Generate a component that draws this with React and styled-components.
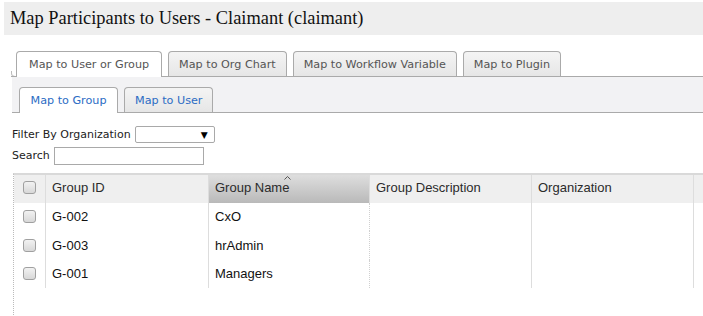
import styled, {createGlobalStyle} from "styled-components";

const GlobalStyle = createGlobalStyle`
  body {
    margin: 0;
    background: #fff;
    font-family: "DejaVu Sans", Verdana, sans-serif;
  }
`

const StyledPage = styled.div`
  padding: 2px 0 0 4px;
  width: 699px;
  overflow: hidden;
`

const StyledTitleBar = styled.div`
  height: 33px;
  background-color: #eeeeee;
  display: flex;
  align-items: center;
  padding-left: 6px;
  margin-right: -20px;
`

const StyledTitle = styled.h1`
  margin: 0;
  font-family: "Liberation Serif", "Times New Roman", serif;
  font-weight: normal;
  font-size: 18.4px;
  color: #111;
`

const StyledTabBar = styled.div`
  position: relative;
  display: flex;
  gap: 6px;
  margin-top: 16px;
  margin-left: 7px;
  padding-left: 5px;
  border-bottom: 1px solid #aaaaaa;
  height: 25px;
  align-items: flex-end;

  &::before {
    content: '';
    position: absolute;
    left: 0;
    bottom: -1px;
    width: 5px;
    height: 5px;
    border-left: 1px solid #bbbbbb;
    border-bottom: 1px solid #aaaaaa;
    border-bottom-left-radius: 4px;
  }
`

const StyledTab = styled.div`
  box-sizing: border-box;
  padding: 0 ${props => props.pad || 10}px;
  display: flex;
  align-items: center;
  font-size: 11.2px;
  color: ${props => props.color || '#555'};
  border: 1px solid #aaaaaa;
  border-bottom: none;
  border-radius: 4px 4px 0 0;
  background: ${props => props.active ? '#fff' : 'linear-gradient(#f4f4f4, #e6e6e6)'};
  margin-bottom: ${props => props.active ? '-1px' : '0'};
  height: ${props => props.active ? '26px' : '25px'};
  white-space: nowrap;
`

const StyledSubPanel = styled.div`
  margin-left: 8px;
  background-color: #f2f2f4;
  padding-top: 9px;
`

const StyledSubTabBar = styled.div`
  display: flex;
  gap: 6px;
  padding-left: 7px;
  border-bottom: 1px solid #aaaaaa;
  height: 26px;
  align-items: flex-end;
`

const StyledFilters = styled.div`
  padding: 13px 0 0 8px;
  display: flex;
  flex-direction: column;
  gap: 3px;
  font-size: 11px;
  color: #222;
`

const StyledFilterRow = styled.label`
  display: flex;
  align-items: center;
  gap: 4px;
  height: ${props => props.tall ? '19px' : '17px'};
`

const StyledSelect = styled.div`
  width: 80px;
  height: 17px;
  box-sizing: border-box;
  border: 1px solid #a9a9a9;
  border-radius: 2px;
  background: #fff;
  display: flex;
  justify-content: flex-end;
  align-items: center;
  padding-right: 6px;
  font-size: 9px;
  color: #000;
`

const StyledInput = styled.div`
  width: 150px;
  height: 18px;
  box-sizing: border-box;
  border: 1px solid #a9a9a9;
  background: #fff;
`

const StyledTable = styled.div`
  margin: 8px 0 0 9px;
  border-top: 2px solid #d9d9d9;
  border-left: 1px dotted #bbbbbb;
  height: 142px;
  font-family: "Liberation Sans", Arial, sans-serif;
  font-size: 13px;
`

const StyledRow = styled.div`
  display: grid;
  grid-template-columns: 32px 163px 161px 162px 162px 30px;
  height: ${props => props.header ? '28px' : '28.4px'};
  background: ${props => props.header ? '#efefef' : '#fff'};
`

const StyledCell = styled.div`
  display: flex;
  align-items: center;
  box-sizing: border-box;
  padding-bottom: ${props => props.header ? '3px' : '1px'};
  padding-left: ${props => props.center ? '0' : '6px'};
  justify-content: ${props => props.center ? 'center' : 'flex-start'};
  border-right: ${props => props.last ? 'none' : `1px ${props.dotted ? 'dotted #d0d0d0' : 'solid #dddddd'}`};
  color: ${props => props.header ? '#2b2b2b' : '#111'};
  position: relative;
  background: ${props => props.sorted ? 'linear-gradient(#dedede, #b9b9b9)' : 'transparent'};
  white-space: nowrap;
`

const StyledSortArrow = styled.svg`
  position: absolute;
  left: 75px;
  top: 1px;
`

const StyledCheckbox = styled.span`
  width: 11px;
  height: 11px;
  border: 1px solid #a0a0a0;
  border-radius: 3px;
  background: linear-gradient(#f2f2f2, #d8d8d8);
`

const groups = [
  {id: 'G-002', name: 'CxO'},
  {id: 'G-003', name: 'hrAdmin'},
  {id: 'G-001', name: 'Managers'},
]

export default function App() {
  return (
    <StyledPage>
      <GlobalStyle/>
      <StyledTitleBar>
        <StyledTitle>Map Participants to Users - Claimant (claimant)</StyledTitle>
      </StyledTitleBar>
      <StyledTabBar>
        <StyledTab active pad={12}>Map to User or Group</StyledTab>
        <StyledTab>Map to Org Chart</StyledTab>
        <StyledTab>Map to Workflow Variable</StyledTab>
        <StyledTab>Map to Plugin</StyledTab>
      </StyledTabBar>
      <StyledSubPanel>
        <StyledSubTabBar>
          <StyledTab active color="#2b6cc4" pad={10.5}>Map to Group</StyledTab>
          <StyledTab color="#2b6cc4">Map to User</StyledTab>
        </StyledSubTabBar>
      </StyledSubPanel>
      <StyledFilters>
        <StyledFilterRow>Filter By Organization <StyledSelect>▼</StyledSelect></StyledFilterRow>
        <StyledFilterRow tall>Search <StyledInput/></StyledFilterRow>
      </StyledFilters>
      <StyledTable>
        <StyledRow header>
          <StyledCell center header><StyledCheckbox/></StyledCell>
          <StyledCell header>Group ID</StyledCell>
          <StyledCell header sorted>
            Group Name
            <StyledSortArrow width="7" height="4" viewBox="0 0 7 4">
              <path d="M0.5 3.5 L3.5 0.5 L6.5 3.5" fill="none" stroke="#555" strokeWidth="1"/>
            </StyledSortArrow>
          </StyledCell>
          <StyledCell header>Group Description</StyledCell>
          <StyledCell header>Organization</StyledCell>
          <StyledCell header last/>
        </StyledRow>
        {groups.map(group => (
          <StyledRow key={group.id}>
            <StyledCell center><StyledCheckbox/></StyledCell>
            <StyledCell>{group.id}</StyledCell>
            <StyledCell dotted>{group.name}</StyledCell>
            <StyledCell>{''}</StyledCell>
            <StyledCell>{''}</StyledCell>
            <StyledCell last/>
          </StyledRow>
        ))}
      </StyledTable>
    </StyledPage>
  );
}
